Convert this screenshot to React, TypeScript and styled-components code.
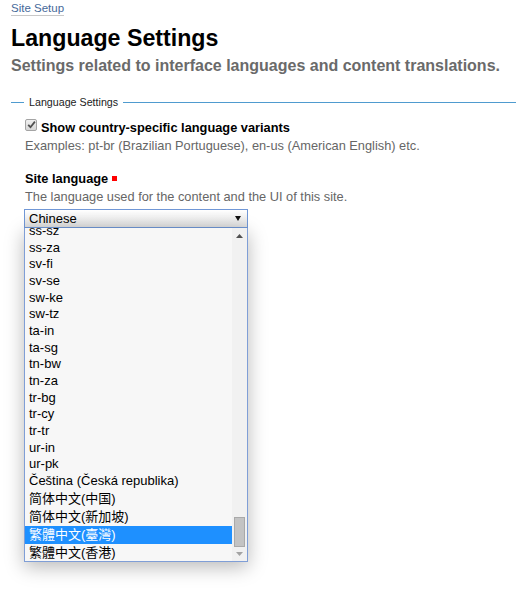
import React from "react";
import styled, { createGlobalStyle } from "styled-components";

const GlobalStyle = createGlobalStyle`
  html, body { margin: 0; padding: 0; background: #ffffff; }
  body { font-family: "Liberation Sans", Arial, sans-serif; color: #000; }
`;

const Page = styled.div`
  padding: 2px 0 0 11px;
  width: 505px;
  min-height: 588px;
`;

const Crumbs = styled.nav`
  display: flex;
`;

const Breadcrumb = styled.a`
  display: block;
  font-size: 11.5px;
  line-height: 13px;
  color: #46699a;
  text-decoration: none;
  border-bottom: 1px solid #c8c8c8;
`;

const Title = styled.h1`
  margin: 8.5px 0 0 0;
  font-size: 23.2px;
  line-height: 27px;
  font-weight: bold;
  color: #000;
`;

const Subtitle = styled.p`
  margin: 4.2px 0 0 0;
  font-size: 16px;
  line-height: 19px;
  font-weight: bold;
  color: #6a6a6a;
`;

const Fieldset = styled.section`
  margin-top: 21.1px;
`;

const LegendRow = styled.div`
  display: flex;
  align-items: center;
  height: 13px;
`;

const Rule = styled.div<{ $grow?: boolean }>`
  height: 1px;
  background: #4f9bcf;
  ${(p) => (p.$grow ? "flex: 1;" : "width: 13px; flex: none;")}
`;

const Legend = styled.span`
  padding: 0 5px;
  font-size: 10.7px;
  line-height: 13px;
  color: #222;
`;

const FieldBody = styled.div`
  padding-left: 14px;
`;

const CheckRow = styled.label`
  display: flex;
  align-items: flex-start;
  gap: 4px;
  margin-top: 11px;
  font-size: 12.8px;
  line-height: 16px;
  font-weight: bold;
  color: #000;
`;

const CheckBox = styled.span`
  box-sizing: border-box;
  width: 12px;
  height: 12px;
  margin-top: -1px;
  flex: none;
  border: 1px solid #a4a4a4;
  border-radius: 2px;
  background: linear-gradient(#f0f0f0, #d6d6d6);
  display: flex;
  align-items: center;
  justify-content: center;
`;

const Help = styled.p<{ $gap: number }>`
  margin: ${(p) => p.$gap}px 0 0 0;
  font-size: 12.8px;
  line-height: 16px;
  color: #666;
`;

const FieldLabel = styled.div`
  display: flex;
  align-items: center;
  gap: 4px;
  margin-top: 16.3px;
  font-size: 12.8px;
  line-height: 16px;
  font-weight: bold;
  color: #000;
`;

const Required = styled.span`
  width: 5px;
  height: 5px;
  background: #ff0000;
`;

const SelectWrap = styled.div`
  margin-top: 3.4px;
  margin-left: -1px;
  width: 224px;
  display: flex;
  flex-direction: column;
`;

const SelectBox = styled.div`
  box-sizing: border-box;
  height: 19px;
  border: 1px solid #7097d6;
  background: linear-gradient(#ffffff, #dedede);
  display: flex;
  align-items: center;
  justify-content: space-between;
  padding: 0 6px 0 4px;
  font-size: 13px;
  line-height: 17px;
  color: #000;
`;

const Popup = styled.div`
  box-sizing: border-box;
  width: 224px;
  height: 334px;
  border: 1px solid #7f9ed6;
  border-top: none;
  background: #f7f7f7;
  box-shadow: 0 5px 18px rgba(0, 0, 0, 0.28);
  display: flex;
  overflow: hidden;
`;

const OptionList = styled.div`
  flex: 1;
  overflow: hidden;
`;

const OptionInner = styled.div`
  margin-top: -4.8px;
`;

const Option = styled.div<{ $cjk?: boolean; $tc?: boolean; $selected?: boolean }>`
  height: ${(p) => (p.$cjk ? "18px" : "16.667px")};
  line-height: ${(p) => (p.$cjk ? "18px" : "16.667px")};
  padding-left: 4px;
  font-size: 13px;
  white-space: nowrap;
  font-family: "Liberation Sans", ${(p) => (p.$tc ? '"Noto Sans CJK TC"' : '"Noto Sans CJK SC"')}, sans-serif;
  color: ${(p) => (p.$selected ? "#ffffff" : "#000")};
  background: ${(p) => (p.$selected ? "#1e90ff" : "transparent")};
`;

const Scrollbar = styled.div`
  width: 15px;
  flex: none;
  background: #f1f1f1;
  display: flex;
  flex-direction: column;
  align-items: center;
`;

const ArrowButton = styled.div<{ $h: number }>`
  height: ${(p) => p.$h}px;
  width: 15px;
  display: flex;
  align-items: center;
  justify-content: center;
`;

const Spacer = styled.div`
  flex: 1;
`;

const Thumb = styled.div`
  box-sizing: border-box;
  width: 11px;
  height: 30px;
  background: #c3c3c3;
  border: 1px solid #a9a9a9;
`;

const options = [
  "ss-sz",
  "ss-za",
  "sv-fi",
  "sv-se",
  "sw-ke",
  "sw-tz",
  "ta-in",
  "ta-sg",
  "tn-bw",
  "tn-za",
  "tr-bg",
  "tr-cy",
  "tr-tr",
  "ur-in",
  "ur-pk",
  "Čeština (Česká republika)",
  "简体中文(中国)",
  "简体中文(新加坡)",
  "繁體中文(臺灣)",
  "繁體中文(香港)",
];

const isCjk = (s: string) => /[\u4e00-\u9fff]/.test(s);
const isTc = (s: string) => s.startsWith("繁");

export default function App() {
  return (
    <>
      <GlobalStyle />
      <Page>
        <Crumbs>
          <Breadcrumb href="#">Site Setup</Breadcrumb>
        </Crumbs>
        <Title>Language Settings</Title>
        <Subtitle>Settings related to interface languages and content translations.</Subtitle>
        <Fieldset>
          <LegendRow>
            <Rule />
            <Legend>Language Settings</Legend>
            <Rule $grow />
          </LegendRow>
          <FieldBody>
            <CheckRow>
              <CheckBox>
                <svg width="9" height="9" viewBox="0 0 9 9">
                  <path d="M1.2 4.8 L3.5 7.2 L7.9 1.6" fill="none" stroke="#505050" strokeWidth="1.8" />
                </svg>
              </CheckBox>
              Show country-specific language variants
            </CheckRow>
            <Help $gap={2.7}>Examples: pt-br (Brazilian Portuguese), en-us (American English) etc.</Help>
            <FieldLabel>
              Site language
              <Required />
            </FieldLabel>
            <Help $gap={2.7}>The language used for the content and the UI of this site.</Help>
            <SelectWrap>
              <SelectBox>
                <span>Chinese</span>
                <svg width="6" height="5" viewBox="0 0 6 5">
                  <polygon points="0,0 6,0 3,5" fill="#111" />
                </svg>
              </SelectBox>
              <Popup>
                <OptionList>
                  <OptionInner>
                    {options.map((o) => (
                      <Option key={o} $cjk={isCjk(o)} $tc={isTc(o)} $selected={o === "繁體中文(臺灣)"}>
                        {o}
                      </Option>
                    ))}
                  </OptionInner>
                </OptionList>
                <Scrollbar>
                  <ArrowButton $h={17}>
                    <svg width="7" height="4" viewBox="0 0 7 4">
                      <polygon points="0,4 7,4 3.5,0" fill="#505050" />
                    </svg>
                  </ArrowButton>
                  <Spacer />
                  <Thumb />
                  <ArrowButton $h={14}>
                    <svg width="7" height="4" viewBox="0 0 7 4">
                      <polygon points="0,0 7,0 3.5,4" fill="#a3a3a3" />
                    </svg>
                  </ArrowButton>
                </Scrollbar>
              </Popup>
            </SelectWrap>
          </FieldBody>
        </Fieldset>
      </Page>
    </>
  );
}
